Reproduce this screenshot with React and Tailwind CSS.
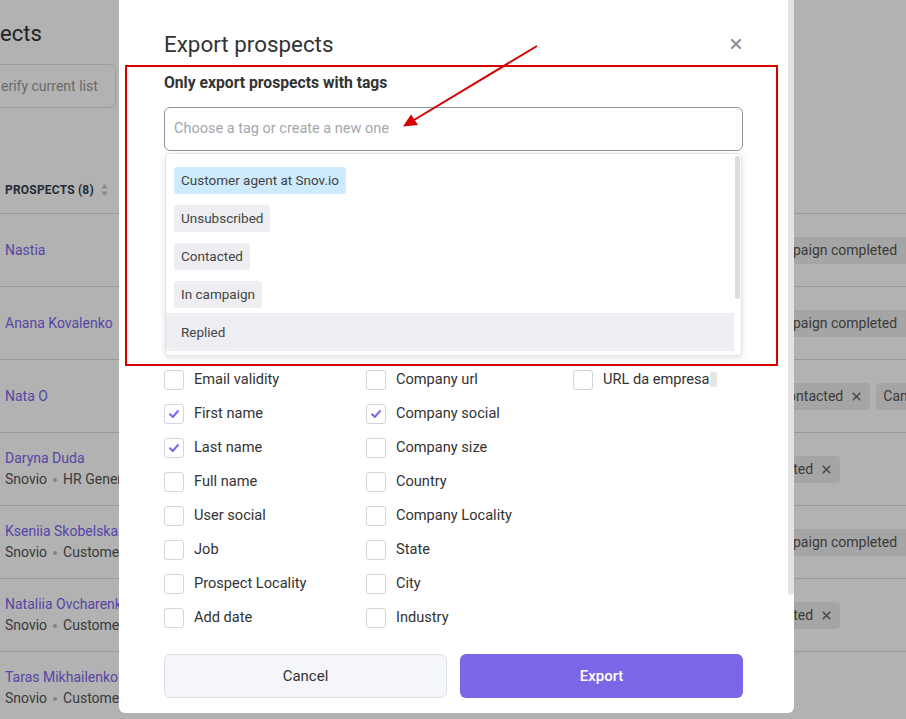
import { X } from "lucide-react";

const rows = [
  { name: "Nastia", tags: [{ label: "Campaign completed" }], offset: "ml-[157px]" },
  { name: "Anana Kovalenko", tags: [{ label: "Campaign completed" }], offset: "ml-[157px]" },
  { name: "Nata O", tags: [{ label: "Contacted" }, { label: "Campaign completed" }], offset: "ml-[172px]" },
  { name: "Daryna Duda", sub: "HR Generalist", tags: [{ label: "Campaign completed" }], offset: "ml-[73px]" },
  { name: "Kseniia Skobelska", sub: "Customer agent", tags: [{ label: "Campaign completed" }], offset: "ml-[157px]" },
  { name: "Nataliia Ovcharenko", sub: "Customer agent", tags: [{ label: "Campaign completed" }], offset: "ml-[73px]" },
  { name: "Taras Mikhailenko", sub: "Customer agent", tags: [], offset: "ml-[157px]" },
];

const col1 = [
  ["Email validity", false],
  ["First name", true],
  ["Last name", true],
  ["Full name", false],
  ["User social", false],
  ["Job", false],
  ["Prospect Locality", false],
  ["Add date", false],
];

const col2 = [
  ["Company url", false],
  ["Company social", true],
  ["Company size", false],
  ["Country", false],
  ["Company Locality", false],
  ["State", false],
  ["City", false],
  ["Industry", false],
];

const options = ["Customer agent at Snov.io", "Unsubscribed", "Contacted", "In campaign", "Replied"];

const Tag = ({ label }) => (
  <span className="h-[27px] px-[7px] rounded-[4px] bg-[#ececec] text-[14px] text-[#555] flex items-center gap-[7px] whitespace-nowrap shrink-0">
    {label}
    <X size={13} strokeWidth={3.2} className="text-[#6f6f6f]" />
  </span>
);

const Check = ({ label, checked, extra }) => (
  <div className="flex items-center h-[34px] gap-[10px]">
    <span className="w-[20px] h-[20px] border border-[#d4d4dc] rounded-[3px] bg-white flex items-center justify-center shrink-0">
      {checked && (
        <svg width="14" height="14" viewBox="0 0 14 14" fill="none">
          <path d="M3 7.2 L5.8 10 L11 4" stroke="#7b68ee" strokeWidth="2" strokeLinecap="round" strokeLinejoin="round" />
        </svg>
      )}
    </span>
    <span className="text-[14.6px] text-[#333] flex items-center whitespace-nowrap">
      {label}
      {extra && <span className="ml-[1px] w-[7px] h-[15px] rounded-[2px] bg-[#e6e6e6]" />}
    </span>
  </div>
);

const App = () => {
  return (
    <div className="relative w-[906px] h-[719px] overflow-hidden bg-white font-['Roboto',sans-serif]">
      {/* page behind the modal */}
      <div>
        <h1 className="pt-[20px] text-[22px] leading-[28px] text-[#333] whitespace-nowrap">ects</h1>
        <div className="mt-[16px] ml-[-20px] w-[136px] h-[44px] border border-[#e2e2e2] rounded-[6px] pl-[20px] flex items-center text-[14px] text-[#999] whitespace-nowrap">
          erify current list
        </div>
        <div className="mt-[70px] h-[36px] pl-[5px] pt-[4px] flex items-start gap-[6px] border-b border-[#dcdcdc]">
          <span className="text-[12px] leading-[16px] font-bold text-[#34404f] tracking-[0.2px]">PROSPECTS (8)</span>
          <svg width="9" height="14" viewBox="0 0 9 14" className="mt-[1px]">
            <path d="M4.5 1 L8 5.5 H1 Z" fill="#c9c9c9" />
            <path d="M4.5 13 L8 8.5 H1 Z" fill="#c9c9c9" />
          </svg>
        </div>
        {rows.map((r) => (
          <div key={r.name} className="h-[73px] flex items-center border-b border-[#dcdcdc]">
            <div className="w-[600px] shrink-0 pl-[5px] text-[14px] leading-[21px] whitespace-nowrap">
              <div className="text-[#7b66ee]">{r.name}</div>
              {r.sub && (
                <div className="text-[#555] flex items-center gap-[6px]">
                  Snovio
                  <span className="w-[4px] h-[4px] rounded-full bg-[#bbb]" />
                  {r.sub}
                </div>
              )}
            </div>
            <div className={`flex gap-[6px] ${r.offset}`}>
              {r.tags.map((t) => (
                <Tag key={t.label} label={t.label} />
              ))}
            </div>
          </div>
        ))}
      </div>

      {/* backdrop */}
      <div className="absolute inset-0 bg-black/30" />

      {/* modal */}
      <div className="absolute left-[119px] top-0 w-[675px] h-[713px] bg-white rounded-b-[6px] overflow-hidden">
        <div className="absolute right-0 top-0 w-[6px] h-[595px] bg-[#e3e3e3] rounded-b-[3px]" />
        <div className="pl-[45px] pr-[51px] pt-[30px]">
          <div className="flex items-center justify-between">
            <h2 className="text-[22.4px] leading-[28px] text-[#333]">Export prospects</h2>
            <svg width="12" height="12" viewBox="0 0 12 12" className="mr-[1px]">
              <path d="M2 2 L10 10 M10 2 L2 10" stroke="#8b9099" strokeWidth="2.2" strokeLinecap="round" />
            </svg>
          </div>
          <div className="mt-[15px] text-[15.7px] leading-[20px] font-bold text-[#333]">Only export prospects with tags</div>
          <div className="relative mt-[14px]">
            <div className="h-[44px] border border-[#8c95a1] rounded-[6px] px-[9px] flex items-center text-[14.5px] text-[#a3a7ae]">
              Choose a tag or create a new one
            </div>
            <div className="absolute left-[1px] right-[1px] top-[46px] h-[203px] bg-white border border-[#e3e3e6] rounded-[4px] shadow-[0_2px_6px_rgba(0,0,0,0.12)] z-10">
              <div className="absolute right-[1px] top-[2px] w-[5px] h-[143px] rounded-full bg-[#dcdcdc]" />
              <div className="pt-[7px] mr-[7px]">
                {options.map((o, i) => (
                  <div key={o} className={`h-[38px] pl-[8px] flex items-center ${i === 4 ? "bg-[#eeeff3]" : ""}`}>
                    <span
                      className={`h-[27px] px-[7px] rounded-[3px] flex items-center text-[13.5px] text-[#444] ${
                        i === 0 ? "bg-[#cdebfc]" : "bg-[#eeeef2]"
                      }`}
                    >
                      {o}
                    </span>
                  </div>
                ))}
              </div>
            </div>
          </div>
          <div className="mt-[212px] grid grid-cols-[202px_207px_1fr]">
            <div>
              {col1.map(([l, c]) => (
                <Check key={l} label={l} checked={c} />
              ))}
            </div>
            <div>
              {col2.map(([l, c]) => (
                <Check key={l} label={l} checked={c} />
              ))}
            </div>
            <div>
              <Check label="URL da empresa" extra />
            </div>
          </div>
          <div className="mt-[19px] grid grid-cols-2 gap-[13px]">
            <button className="h-[44px] rounded-[6px] border border-[#dfe1e8] bg-[#f5f6fa] text-[15px] text-[#333]">Cancel</button>
            <button className="h-[44px] rounded-[6px] bg-[#7b66e8] text-[15px] font-medium text-white">Export</button>
          </div>
        </div>
      </div>

      {/* annotation */}
      <div className="absolute left-[125px] top-[65px] w-[653px] h-[301px] border-2 border-[#d60000]" />
      <svg className="absolute inset-0" width="906" height="719">
        <line x1="537" y1="46" x2="414" y2="120" stroke="#d60000" strokeWidth="2" />
        <path d="M403 126.5 L411 114.5 L418 125 Z" fill="#d60000" />
      </svg>
    </div>
  );
};

export default App;
